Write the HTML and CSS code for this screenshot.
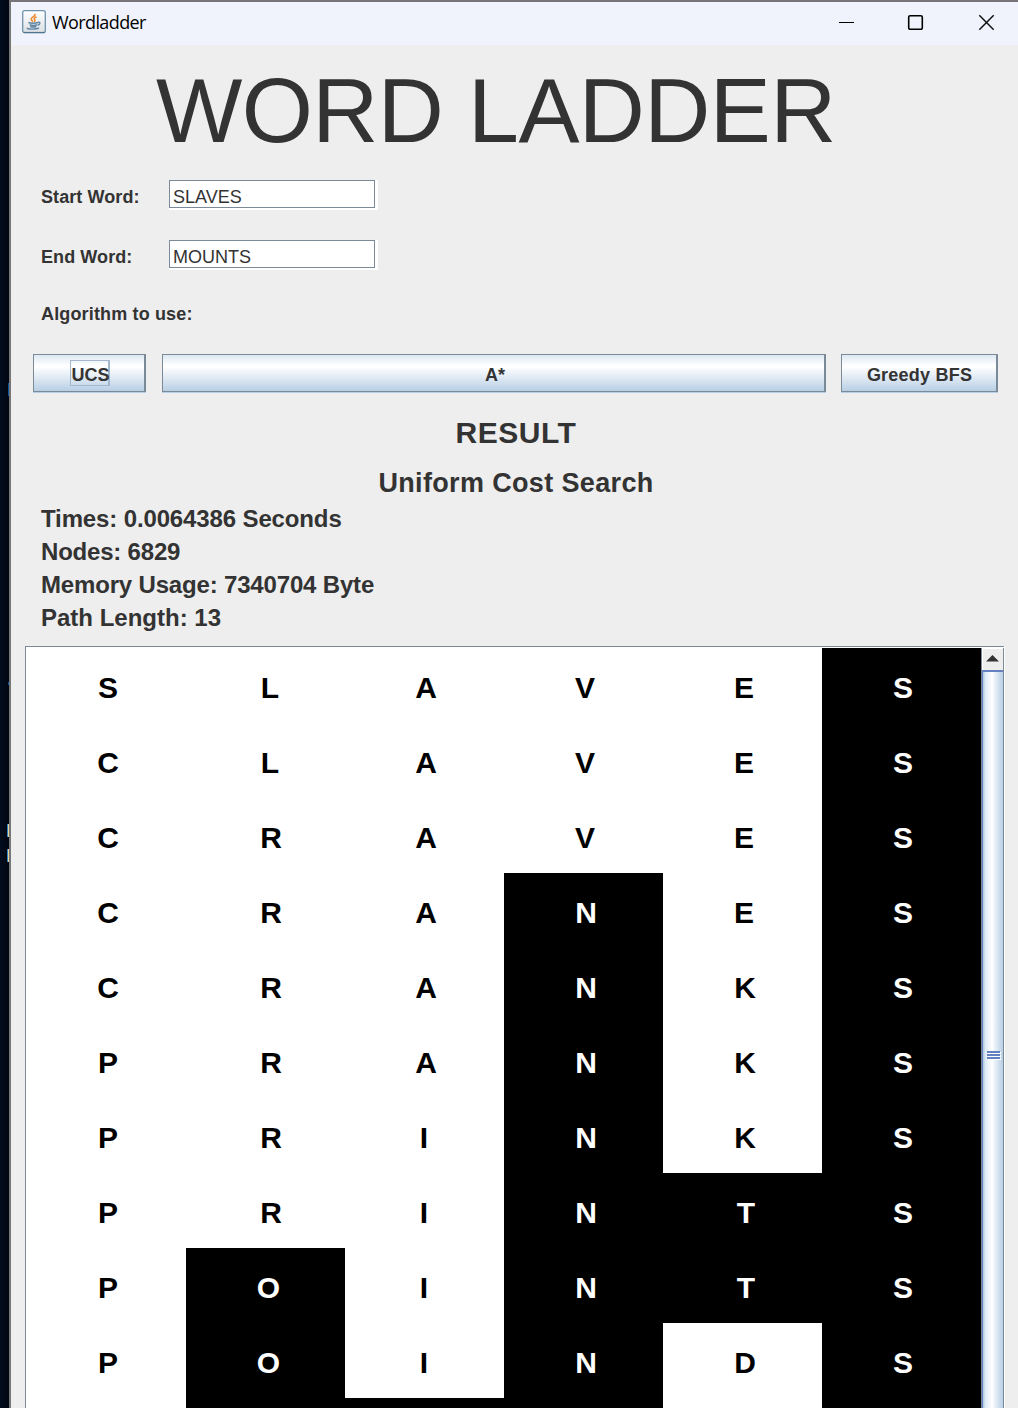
FILE: index.html
```html
<!DOCTYPE html>
<html lang="en">
<head>
<meta charset="utf-8">
<title>Wordladder</title>
<link rel="stylesheet" href="styles.css">
</head>
<body>
<div class="desktop">
  <i class="mark mark-a"></i><i class="mark mark-b"></i><i class="mark mark-c"></i><i class="mark mark-d"></i>
</div>
<div class="window">
  <header class="titlebar">
    <svg class="app-icon" width="24" height="24" viewBox="0 0 24 24">
      <defs><linearGradient id="ig" x1="0" y1="0" x2="0" y2="1"><stop offset="0" stop-color="#fff"/><stop offset="1" stop-color="#dcdfe3"/></linearGradient></defs>
      <rect x=".7" y=".7" width="22.6" height="22" rx="2" fill="url(#ig)" stroke="#6f93aa" stroke-width="1.3"/>
      <path d="M1.5 22.5h21" stroke="#4d7592" stroke-width="1.2"/>
      <path d="M12.8 3.8c1.2 2.5-3.6 3.3-3.6 5.2 0 1.2 1 1.8 1.8 2.8M14.5 6.8c-2.8 1.3-2.6 2-1.7 3.1.4.7 0 1.4-.7 1.9" fill="none" stroke="#ee8a2e" stroke-width="1.6"/>
      <path d="M6.4 12.5c2 1 7.500 1 9.800 0M7.600 14.600c2 .9 5.600.9 7.600 0M8.200 16.500c2 .7 4.400.7 6.200 0M16 12.300c2.700-.6 2.500 2.300-.3 3M5.500 17.700c-2 1.800 9.500 1.800 11.500.2" fill="none" stroke="#6087a5" stroke-width="1.400"/>
    </svg>
    <span class="caption">Wordladder</span>
    <svg class="controls" width="156" height="16" viewBox="0 0 156 16">
      <path d="M0 8.500h15" stroke="#000"/>
      <rect x="69.700" y="1.700" width="13.600" height="13.600" rx="1.500" fill="none" stroke="#000" stroke-width="1.600"/>
      <path d="M140.300 1.300l14.400 14.400M154.700 1.300l-14.400 14.400" stroke="#111" stroke-width="1.500"/>
    </svg>
  </header>
  <main class="content">
    <h1>WORD LADDER</h1>
    <div class="field"><label for="s">Start Word:</label><div class="inset"><input id="s" value="SLAVES"></div></div>
    <div class="field"><label for="e">End Word:</label><div class="inset"><input id="e" value="MOUNTS"></div></div>
    <p class="algo">Algorithm to use:</p>
    <div class="buttons">
      <button><span class="focus">UCS</span></button><button class="astar">A*</button><button class="greedy">Greedy BFS</button>
    </div>
    <h2>RESULT</h2>
    <h3>Uniform Cost Search</h3>
    <div class="stats">
      <p class="times">Times: 0.0064386 Seconds</p>
      <p class="nodes">Nodes: 6829</p>
      <p class="memory">Memory Usage: 7340704 Byte</p>
      <p>Path Length: 13</p>
    </div>
    <section class="pane">
      <div class="ladder">
        <b>S</b><b class="l">L</b><b>A</b><b>V</b><b>E</b><b class="hit">S</b>
        <b>C</b><b class="l">L</b><b>A</b><b>V</b><b>E</b><b class="hit">S</b>
        <b>C</b><b class="r">R</b><b>A</b><b>V</b><b>E</b><b class="hit">S</b>
        <b>C</b><b class="r">R</b><b>A</b><b class="hit n">N</b><b>E</b><b class="hit">S</b>
        <b>C</b><b class="r">R</b><b>A</b><b class="hit n">N</b><b class="k">K</b><b class="hit">S</b>
        <b>P</b><b class="r">R</b><b>A</b><b class="hit n">N</b><b class="k">K</b><b class="hit">S</b>
        <b>P</b><b class="r">R</b><b class="i">I</b><b class="hit n">N</b><b class="k">K</b><b class="hit">S</b>
        <b>P</b><b class="r">R</b><b class="i">I</b><b class="hit n">N</b><b class="hit t">T</b><b class="hit">S</b>
        <b>P</b><b class="hit o">O</b><b class="i">I</b><b class="hit n">N</b><b class="hit t">T</b><b class="hit">S</b>
        <b>P</b><b class="hit o">O</b><b class="i">I</b><b class="hit n">N</b><b class="k">D</b><b class="hit">S</b>
        <b></b><b class="hit"></b><b class="hit"></b><b class="hit"></b><b></b><b class="hit"></b>
      </div>
      <div class="scrollbar">
        <div class="up"><svg width="13" height="7" viewBox="0 0 13 7"><path d="M6.500 0L13 6.500H0z" fill="#333"/></svg></div>
        <div class="thumb"><div class="grip"><i></i><i></i><i></i></div></div>
      </div>
    </section>
  </main>
</div>
</body>
</html>
```

FILE: styles.css
```css
* { box-sizing: border-box; }
body {
  margin: 0;
  width: 1018px;
  height: 1408px;
  overflow: hidden;
  display: flex;
  background: #eee;
  color: #333;
  font-family: "Liberation Sans", Arial, sans-serif;
}
h1, h2, h3, p { margin: 0; white-space: nowrap; }
.desktop { position: relative; width: 9px; background: linear-gradient(90deg, #020d1d, #010713); }
.mark { position: absolute; right: 0; width: 1px; background: #07539c; }
.mark-a { top: 383px; height: 13px; }
.mark-b { top: 682px; height: 3px; }
.mark-c, .mark-d { width: 2px; height: 13px; background: linear-gradient(90deg, #2b7fc0 50%, #e6d597 50%); }
.mark-c { top: 824px; }
.mark-d { top: 849px; }
.window { width: 1009px; height: 1408px; overflow: hidden; border-left: 2px solid #777; border-top: 2px solid #777577; }

.titlebar { display: flex; align-items: flex-start; height: 43px; padding: 8px 0 0 11px; background: #f0f3fb; color: #000; }
.caption { width: 105px; margin-left: 6px; font: 18px/24px "Open Sans", "Noto Sans", sans-serif; letter-spacing: -0.6px; }
.controls { margin: 4px 0 0 682px; }

.content { display: flex; flex-direction: column; }
h1 { height: 104px; padding: 13px 0 0 145px; font-size: 91.5px; line-height: 104px; font-weight: 400; letter-spacing: -0.6px; }
.field { display: flex; height: 60px; padding: 31px 0 0 30px; font-size: 18px; }
.field label { width: 128px; padding-top: 7px; line-height: 21px; font-weight: 700; letter-spacing: .08px; }
.inset { width: 209px; height: 30px; padding: 0 3px 2px 0; background: #fff; }
.inset input { display: block; width: 206px; height: 28px; padding: 6px 3px 0; border: 1px solid #7a8a99; outline: 0; background: #fff; color: #333; font: 18px/20px "Liberation Sans", Arial, sans-serif; }
.algo { height: 85px; padding: 35px 0 0 30px; font-size: 18px; line-height: 21px; font-weight: 700; letter-spacing: .15px; }
.buttons { display: flex; padding: 0 0 0 22px; height: 38px; }
button { width: 157px; display: flex; align-items: center; justify-content: center; padding: 4px 0 0 1px; border: 1px solid #7a8a99; border-right-width: 2px; background: linear-gradient(#dde8f3, #fff 30%, #fff 33%, #b8cfe5); box-shadow: 0 1px #b8cfe5; color: #333; font: 700 18px/21px "Liberation Sans", Arial, sans-serif; }
button:first-child { width: 113px; }
button.astar { width: 664px; margin: 0 15px 0 16px; padding-left: 3px; }
button.greedy { letter-spacing: .22px; }
.focus { width: 40px; height: 26px; margin-top: -5px; padding: 4px 0 0 1px; border: 1px solid #a3b8cc; border-right-width: 2px; }
h2 { width: 1010px; height: 49px; padding-top: 24px; text-align: center; font-size: 30px; line-height: 34px; letter-spacing: .5px; }
h3 { width: 1010px; height: 60px; padding-top: 27px; text-align: center; font-size: 27px; line-height: 31px; letter-spacing: .35px; }
.stats { height: 145px; padding: 1px 0 0 30px; font-size: 24px; line-height: 33px; font-weight: 700; }
.times { letter-spacing: -.13px; }
.nodes { letter-spacing: -.2px; }
.memory { letter-spacing: -.17px; }

.pane { display: flex; width: 979px; height: 900px; margin-left: 14px; border: 1px solid #7a8a99; border-bottom: 0; border-right: 0; padding: 1px 0 0 1px; background: #fff; box-shadow: 1px 1px #fff; }
.ladder { display: grid; flex: none; grid-template-columns: repeat(6, 159px); grid-auto-rows: 75px; width: 954px; align-content: start; background: #fff; color: #000; font-size: 30px; line-height: 34px; }
.ladder b { padding: 23px 0 0 3px; text-align: center; }
.ladder .l { padding-left: 9px; }
.ladder .r { padding-left: 11px; }
.ladder .o { padding-left: 6px; }
.ladder .i { padding-left: 1px; padding-right: 2px; }
.ladder .n { padding-left: 5px; }
.ladder .k { padding-left: 5px; }
.ladder .t { padding-left: 7px; }
.ladder .hit { background: #000; color: #fff; }
.scrollbar { width: 23px; border-left: 1px solid #7a8a99; border-right: 1px solid #7a8a99; background: #eee; }
.up { display: flex; justify-content: center; height: 22px; padding: 7px 1px 0 0; box-shadow: inset 1px 1px #fff; }
.thumb { height: 880px; padding: 379px 0 0 4px; border-top: 2px solid #6382bf; border-left: 1px solid #6382bf; background: linear-gradient(90deg, #b8cfe5 0 1px, #dce8f4 2px, #fff 9px, #e9f0f7 12px, #b8cfe5); }
.grip { display: grid; gap: 1px; width: 14px; }
.grip i { height: 2px; width: 13px; background: #6382bf; box-shadow: 1px 1px #fff; }
```
